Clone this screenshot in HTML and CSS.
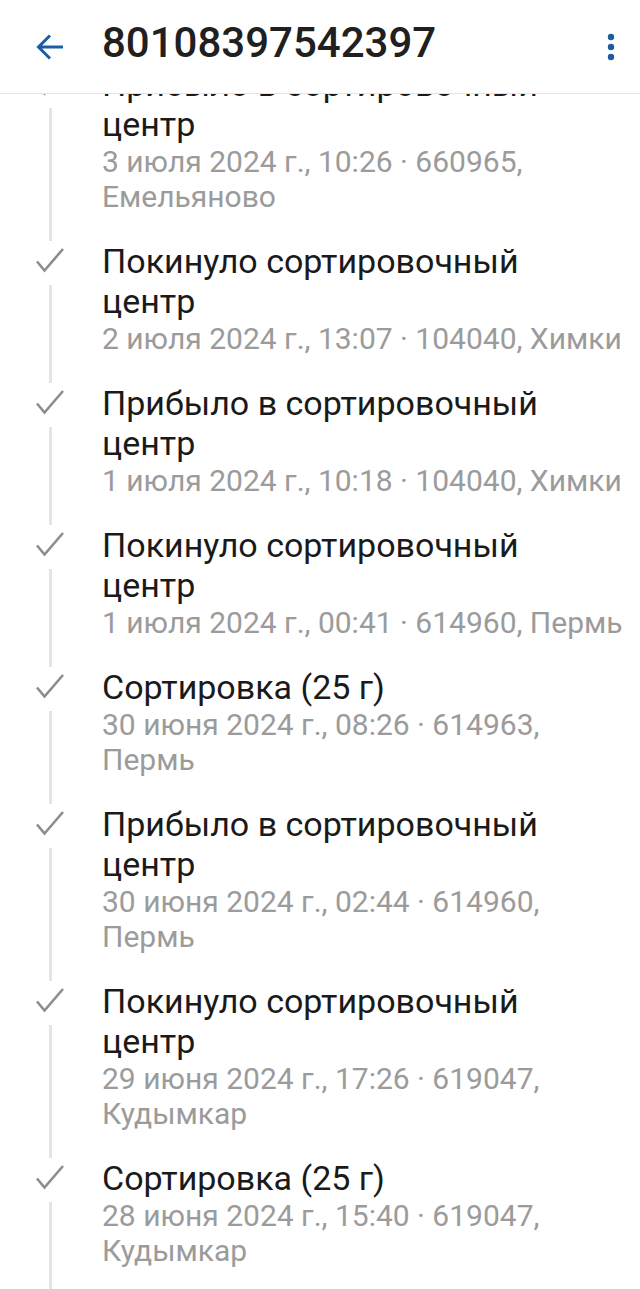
FILE: index.html
```html
<!DOCTYPE html>
<html lang="ru">
<head>
  <meta charset="UTF-8">
  <title>80108397542397</title>
  <link rel="stylesheet" href="styles.css">
</head>
<body>

  <header class="topbar">
    <button class="icon-btn back-btn" aria-label="Назад">
      <svg width="32" height="32" viewBox="0 0 32 32">
        <path d="M29 16H5M16 4.5L4.5 16 16 27.5" fill="none" stroke="#1b5ca4" stroke-width="3"/>
      </svg>
    </button>
    <h1 class="track-number">80108397542397</h1>
    <button class="icon-btn menu-btn" aria-label="Меню">
      <svg width="12" height="34" viewBox="0 0 12 34">
        <circle cx="6" cy="7" r="3.2" fill="#1b5ca4"/>
        <circle cx="6" cy="17" r="3.2" fill="#1b5ca4"/>
        <circle cx="6" cy="27" r="3.2" fill="#1b5ca4"/>
      </svg>
    </button>
  </header>

  <main class="track">
    <ul class="events" id="events"></ul>
  </main>

  <script>
    // Line breaks kept as in the app (narrow column)
    const events = [
      ['Прибыло в сортировочный\nцентр', '3 июля 2024 г., 10:26 · 660965,\nЕмельяново'],
      ['Покинуло сортировочный\nцентр', '2 июля 2024 г., 13:07 · 104040, Химки'],
      ['Прибыло в сортировочный\nцентр', '1 июля 2024 г., 10:18 · 104040, Химки'],
      ['Покинуло сортировочный\nцентр', '1 июля 2024 г., 00:41 · 614960, Пермь'],
      ['Сортировка (25 г)', '30 июня 2024 г., 08:26 · 614963,\nПермь'],
      ['Прибыло в сортировочный\nцентр', '30 июня 2024 г., 02:44 · 614960,\nПермь'],
      ['Покинуло сортировочный\nцентр', '29 июня 2024 г., 17:26 · 619047,\nКудымкар'],
      ['Сортировка (25 г)', '28 июня 2024 г., 15:40 · 619047,\nКудымкар']
    ];

    const list = document.getElementById('events');
    const check = '<svg class="check" width="30" height="28" viewBox="0 0 30 28">' +
      '<path d="M2 14.5L9.5 23.5 28 2" fill="none" stroke="#8d8d8d" stroke-width="2.6"/></svg>';

    // Build timeline rows
    events.forEach(([title, meta]) => {
      const li = document.createElement('li');
      li.className = 'event';
      li.innerHTML =
        '<div class="marker">' + check + '<span class="line"></span></div>' +
        '<div class="info"><p class="title">' + title + '</p>' +
        '<p class="meta">' + meta + '</p></div>';
      list.appendChild(li);
    });
  </script>

</body>
</html>
```

FILE: styles.css
```css
body {
  margin: 0;
  background: #fff;
  font-family: Roboto, "Noto Sans", sans-serif;
  color: #1d1d1d;
  overflow: hidden;
}

.topbar {
  position: relative;
  z-index: 1;
  display: flex;
  align-items: center;
  height: 93px;
  background: #fff;
  border-bottom: 1px solid #e4e4e4;
}

.icon-btn {
  border: none;
  background: none;
  padding: 0;
  display: flex;
  align-items: center;
  justify-content: center;
}

.back-btn {
  width: 100px;
  height: 84px;
}

.track-number {
  flex: 1;
  margin: 0 0 8px 2px;
  font-size: 42px;
  font-weight: 500;
  letter-spacing: 0;
  color: #202020;
}

.menu-btn {
  width: 58px;
  height: 84px;
}

.track {
  margin-top: -30px;
}

.events {
  list-style: none;
  margin: 0;
  padding: 0;
}

.event {
  display: flex;
  padding-bottom: 27px;
}

.marker {
  width: 100px;
  flex-shrink: 0;
  display: flex;
  flex-direction: column;
  align-items: center;
  margin-bottom: -27px;
}

.check {
  margin-top: 6px;
}

.line {
  flex: 1;
  width: 3px;
  margin-top: 10px;
  background: #e4e4e4;
}

.info {
  margin-left: 2px;
  white-space: pre-line;
}

.title {
  margin: 0;
  font-size: 34px;
  line-height: 40px;
  color: #1a1a1a;
}

.meta {
  margin: 0;
  font-size: 30px;
  line-height: 35px;
  color: #9b9b9b;
}
```
